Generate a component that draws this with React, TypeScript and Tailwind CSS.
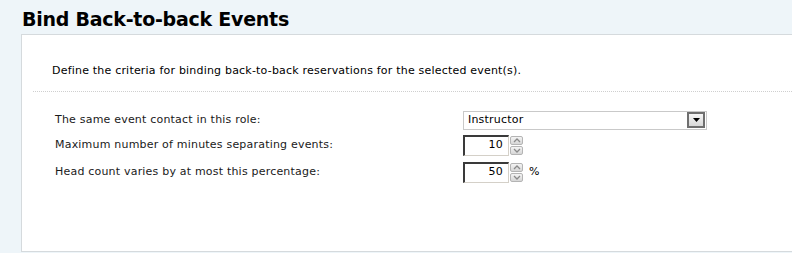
import React from "react";

const font = { fontFamily: '"DejaVu Sans", Verdana, sans-serif' };

function Spinner() {
  return (
    <div className="flex flex-col gap-[1px] ml-[1px]">
      {[0, 1].map((i) => (
        <div
          key={i}
          className="w-[13px] h-[9px] border border-[#b4b4b4] rounded-[2px] bg-gradient-to-b from-[#f4f4f4] to-[#d6d6d6] flex items-center justify-center"
        >
          <svg width="8" height="5" viewBox="0 0 8 5">
            {i === 0 ? (
              <path d="M1 4 L4 1 L7 4" fill="none" stroke="#8a8a8a" strokeWidth="1.3" />
            ) : (
              <path d="M1 1 L4 4 L7 1" fill="none" stroke="#8a8a8a" strokeWidth="1.3" />
            )}
          </svg>
        </div>
      ))}
    </div>
  );
}

function NumberBox({ value }: { value: string }) {
  return (
    <div className="flex items-center">
      <div className="w-[46px] h-[21px] border-t-2 border-l-2 border-t-[#3a3a3a] border-l-[#3a3a3a] border-b border-r border-b-[#d4d0c8] border-r-[#d4d0c8] bg-white flex items-center justify-end pr-[5px] text-[11px] text-black">
        {value}
      </div>
      <Spinner />
    </div>
  );
}

export default function App() {
  return (
    <div className="w-[792px] h-[253px] bg-[#eef5f9] overflow-hidden pl-[21px] text-black" style={font}>
      <h1 className="h-[34px] pt-[8px] pl-[1px] text-[19px] font-bold leading-[22px] tracking-[-0.25px]">
        Bind Back-to-back Events
      </h1>
      <div className="w-[800px] h-[218px] bg-white border border-[#d5dadd]">
        <p className="pt-[29px] pl-[30px] text-[11px] leading-[14px] h-[56px] tracking-[0.2px]">
          Define the criteria for binding back-to-back reservations for the selected event(s).
        </p>
        <div className="ml-[11px] border-t border-dotted border-[#cfcfcf]" />
        <div className="pl-[33px] pt-[18px] text-[11px] text-[#1a1a1a] tracking-[0.2px]">
          <div className="flex items-center h-[20px]">
            <div className="w-[408px]">The same event contact in this role:</div>
            <div className="w-[244px] h-[19px] border border-[#c9c9c9] flex items-center justify-between pl-[4px] pr-[1px] bg-white">
              <span className="text-black">Instructor</span>
              <div className="w-[18px] h-[16px] border-2 border-[#6f6f6f] bg-gradient-to-b from-[#f6f6f6] to-[#d8d8d8] flex items-center justify-center">
                <svg width="7" height="4" viewBox="0 0 7 4">
                  <path d="M0 0 L7 0 L3.5 4 Z" fill="#000" />
                </svg>
              </div>
            </div>
          </div>
          <div className="flex items-center h-[22px] mt-[4px]">
            <div className="w-[408px]">Maximum number of minutes separating events:</div>
            <NumberBox value="10" />
          </div>
          <div className="flex items-center h-[22px] mt-[5px]">
            <div className="w-[408px]">Head count varies by at most this percentage:</div>
            <NumberBox value="50" />
            <span className="ml-[6px] text-black">%</span>
          </div>
        </div>
      </div>
    </div>
  );
}
